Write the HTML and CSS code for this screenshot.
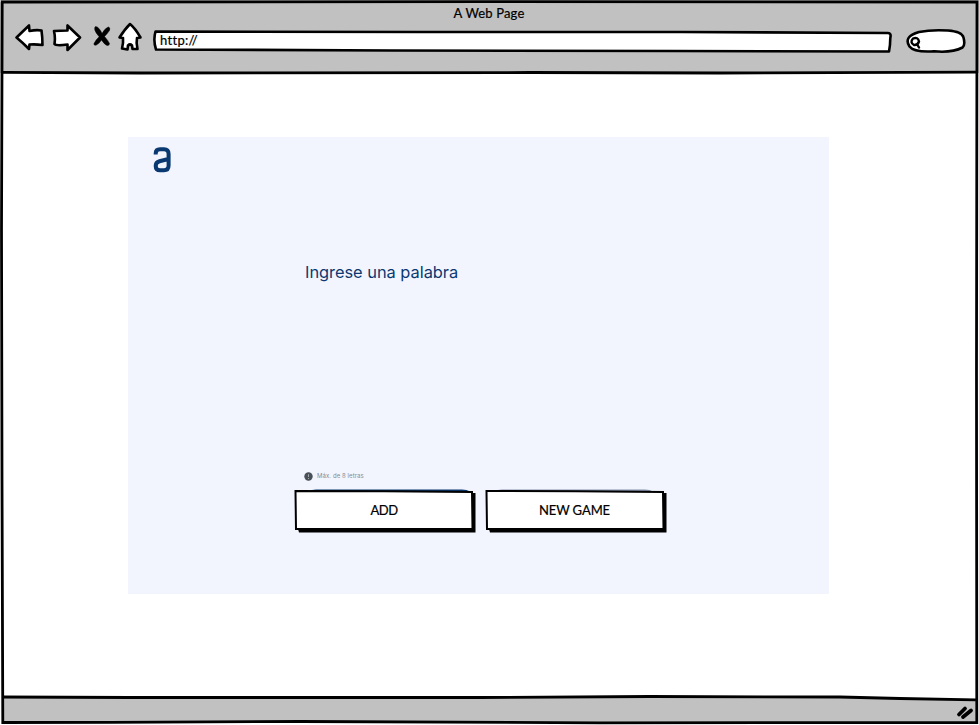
FILE: index.html
```html
<!DOCTYPE html>
<html lang="es">
<head>
<meta charset="utf-8">
<title>A Web Page</title>
<link rel="stylesheet" href="styles.css">
</head>
<body>
<div class="window">
  <header class="chrome">
    <div class="title"><span>A Web Page</span></div>
    <nav class="toolbar">
      <svg class="icon back" width="30" height="28" viewBox="0.500 0.500 30 28"><path d="M2 14 L14.500 2 L15 7.500 Q22 6 27 7 Q28 14 28 21.500 Q21 20.500 15 21 L14.500 25.500 Q8 19 2 14Z"/></svg>
      <svg class="icon forward" width="30" height="28" viewBox="0 0.500 30 28"><path d="M28 14 L15.500 2 L15.500 7 Q9 7 2 7.500 Q3.500 14 2.500 20.500 Q4 22.500 15.500 21 L15.500 26.500 Q23 19 28 14Z"/></svg>
      <svg class="icon stop" width="18" height="22" viewBox="0 0 18 22"><path class="solid" d="M2.500 .5 Q6 .8 9 7.500 Q12 2 15.500 1 Q17.500 1.500 16.500 4.500 Q14 8 11.500 10.500 Q15 14.500 16.500 17.500 Q16.500 19.800 14 19.500 Q11.500 18.500 8.500 14 Q6 18 3 19.200 Q.3 19.500 1 17.500 Q3.500 13 6.200 10.800 Q2.500 6.500 1.800 4 Q1.300 1 2.500 .5Z"/></svg>
      <svg class="icon home" width="26" height="30" viewBox="0 0 26 30"><path d="M13 2 Q8 7 2.500 15.500 L6 16 Q6.500 21 5 26.500 L10.500 27.500 L11 23.500 Q13 21.500 15 23.500 L15.500 27 L20.500 27 Q19 21 20 16 L23.500 15.500 Q18 6 13 2Z"/></svg>
      <div class="address">
        <svg width="740" height="24" viewBox="0 0 740 24"><path d="M3.500 2.500 L270 3 L530 3 L736 4 Q739.500 4 738.300 9 Q738.300 16 737 22.500 L520 22 L240 21.500 L4 20.500 Q1 11 3.500 2.500Z"/></svg>
        <span>http://</span>
      </div>
      <svg class="search" width="62" height="26" viewBox="0 0 62 26"><path d="M14 4 Q26 1.500 43 2.500 Q57 3.500 58.500 9.500 Q60.500 17 57.500 19.500 Q47 25 29 23.300 Q9 24.500 4.500 18.500 Q-2 8.500 14 4Z"/><path class="lens" d="M8 10.500 Q13 8.500 14 13.500 Q12.500 17.500 9 17 Q4.500 14.500 8 10.500Z"/><path class="handle" d="M12.500 17 L14 19.500"/></svg>
    </nav>
  </header>
  <main class="page">
    <section class="card">
      <svg class="logo" width="19" height="26" viewBox="0 0 19 26" role="img"><path d="M2.700 7.500 V6.500 Q2.700 2.200 7 2.200 H11 Q15.600 2.200 15.600 7 V18.500 Q15.600 23.300 11 23.300 H7 Q2.700 23.300 2.700 19 Q2.700 15.300 6.500 14.300 L15.500 12"/></svg>
      <p class="prompt">Ingrese una palabra</p>
      <p class="hint"><svg width="9" height="9" viewBox="0 0 9 9"><circle cx="4.500" cy="4.500" r="4.200"/><path d="M4.500 2.200V5M4.500 6V7"/></svg>Máx. de 8 letras</p>
      <div class="actions">
        <button class="btn add"><svg width="182" height="44" viewBox="0 0 182 44"><path class="peek" d="M14 2.500 Q18 .5 22 .5 H168 Q173 .5 176 2.500Z"/><path class="shade" d="M178 4 H181.500 V43.500 L5 43.500 L4 40 H178Z"/><path class="face" d="M1.500 2 L90 2.200 L178 3 L178.500 40 L90 40 L2 40 Z"/></svg><span>ADD</span></button>
        <button class="btn new"><svg width="182" height="44" viewBox="0 0 182 44"><path class="peek" d="M9 2.500 Q12 .5 17 .5 H160 Q165 .5 168 2.500Z"/><path class="shade" d="M178 4 H181.500 V43.500 L5 43.500 L4 40 H178Z"/><path class="face" d="M1.500 2 L90 2.200 L178 3 L178.500 40 L90 40 L2 40 Z"/></svg><span>NEW GAME</span></button>
      </div>
    </section>
  </main>
  <footer class="status"></footer>
  <svg class="frame" width="979" height="725" viewBox="0 0 979 725">
    <path class="status-fill" d="M3 697.500 L310 697 L640 697 L790 697 L976 700 V722 H3Z"/>
    <path d="M1 2 L490 1.700 L977 2 L976.500 370 L976.800 722.500 L600 722.800 L300 721.500 L110 722.300 L2.800 722.500 L2 480 L1.500 230 L2.200 2"/>
    <path d="M3 72.300 L140 73 L530 72.500 L720 73 L976 72.200"/>
    <path d="M2 697 L130 697.500 L480 697.500 L650 696.500 L840 697 L900 698.500 L976 699.800"/>
    <path class="grip" d="M959 714.500 L965 708.500M963 717 L971 710.500"/>
  </svg>
</div>
</body>
</html>
```

FILE: styles.css
```css
* { box-sizing: border-box; }
body { margin: 0; background: #fff; color: #000; font-family: Lato, "Open Sans", sans-serif; }
p { margin: 0; }
svg { display: block; }
.window { position: relative; width: 979px; height: 725px; display: grid; grid-template-rows: 73px 1fr 27px; overflow: hidden; }
.chrome { background: #c1c1c1; }
.title { height: 24px; padding: 5px 1px 0 0; text-align: center; font-size: 13px; line-height: 17px; letter-spacing: .15px; -webkit-text-stroke: .2px #000; }
.toolbar { display: flex; align-items: flex-start; padding-left: 15px; }
.icon, .search, .address svg { fill: #fff; stroke: #000; stroke-width: 2.6; stroke-linejoin: round; }
.icon .solid { fill: #000; stroke-width: .5; }
.forward { margin-left: 7px; }
.stop { margin: 2px 0 0 11px; }
.home { margin: -2px 0 0 6px; }
.address { display: grid; width: 740px; height: 24px; margin: 5px 0 0 9px; }
.address > * { grid-area: 1 / 1; }
.address span { padding: 2px 0 0 8px; font-size: 13px; line-height: 18px; letter-spacing: .3px; -webkit-text-stroke: .2px #000; z-index: 1; }
.search { margin: 4px 0 0 13px; }
.search .lens { stroke-width: 2.4; }
.search .handle { stroke-width: 2.4; stroke-linecap: round; }
.page { padding: 64px 0 0 128px; }
.card { display: flex; flex-direction: column; width: 701px; height: 457px; background: #f2f5fd; }
.logo { margin: 10px 0 0 25px; fill: none; stroke: #0a3871; stroke-width: 4; }
.prompt { margin: 87px 0 0 177px; color: #0a3871; font: 16.4px/24px Inter, sans-serif; letter-spacing: -.02px; }
.hint { display: flex; align-items: center; gap: 4px; margin: 187px 0 0 176px; height: 10px; color: #858b94; font: 6px/10px Inter, sans-serif; letter-spacing: .08px; }
.hint svg { fill: #495057; stroke: #b7bcc3; stroke-width: .8; }
.hint circle { stroke: none; }
.actions { display: flex; gap: 9px; margin: 8px 0 0 166px; }
.btn { display: grid; width: 182px; height: 44px; padding: 0; border: 0; background: none; color: #000; font: 13px/16px Lato, sans-serif; letter-spacing: -.1px; }
.btn > * { grid-area: 1 / 1; }
.btn span { z-index: 1; place-self: center; padding-right: 3px; padding-bottom: 3px; -webkit-text-stroke: .2px #000; }
.add span { letter-spacing: -.5px; padding-right: 2px; }
.face { fill: #fff; stroke: #000; stroke-width: 2; }
.shade { fill: #000; }
.peek { fill: #0a3871; }
.new .peek { fill: #8290aa; }
.status { background: transparent; }
.frame { position: absolute; inset: 0; fill: none; stroke: #000; stroke-width: 2.800; pointer-events: none; }
.frame .status-fill { fill: #c1c1c1; stroke: none; }
.frame .grip { stroke-width: 3.800; stroke-linecap: round; }
```
